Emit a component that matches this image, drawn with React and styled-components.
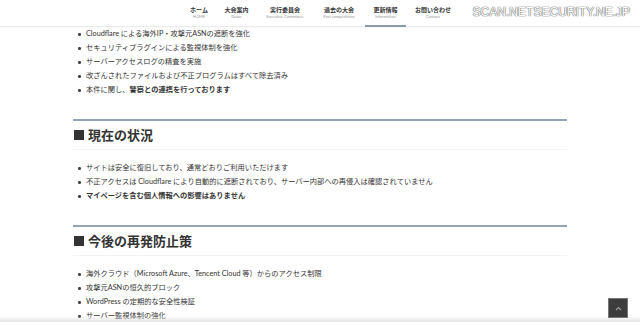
import React from "react";
import styled, { createGlobalStyle } from "styled-components";

const Global = createGlobalStyle`
  html, body { margin: 0; padding: 0; background: #fff; }
  body {
    font-family: Lato, "Noto Sans CJK JP", sans-serif;
    color: #333;
    overflow: hidden;
    height: 322px;
  }
`;

const Page = styled.div`
  width: 640px;
  height: 322px;
  position: relative;
  overflow: hidden;
`;

const Header = styled.header`
  height: 27px;
  border-bottom: 1px solid #ebebeb;
  box-shadow: 0 1px 2px rgba(0,0,0,0.03);
  display: flex;
  justify-content: flex-start;
  padding-left: 182px;
  box-sizing: border-box;
`;

const Nav = styled.nav`
  display: flex;
  height: 100%;
`;

const NavItem = styled.div`
  display: flex;
  flex-direction: column;
  align-items: center;
  justify-content: center;
  padding: 1px 0 0;
  width: ${p => p.$w}px;
  box-sizing: border-box;
  border-bottom: 2px solid ${p => (p.$active ? "#8a9aab" : "transparent")};
  height: 27px;
`;

const NavJp = styled.span`
  font-size: 6px;
  font-weight: 700;
  color: #333;
  line-height: 8px;
`;

const NavEn = styled.span`
  font-size: 4px;
  color: #999;
  line-height: 6px;
  white-space: nowrap;
`;

const Watermark = styled.div`
  position: absolute;
  top: 4px;
  right: 10px;
  font-family: "Liberation Sans", sans-serif;
  font-size: 12.2px;
  letter-spacing: -0.1px;
  color: #fff;
  text-shadow: 0 0 1px #666, 0 0 1px #666, 0 0 1px #888;
  line-height: 16px;
`;

const Main = styled.main`
  width: 494px;
  margin: 0 auto;
`;

const List = styled.ul`
  list-style: none;
  margin: 0;
  padding: ${p => p.$pt || 0}px 0 0 13px;
`;

const Item = styled.li`
  position: relative;
  font-size: 7.25px;
  line-height: 14px;
  height: 14px;
  white-space: nowrap;
  font-weight: ${p => (p.$bold ? 700 : 400)};
  &::before {
    content: "";
    position: absolute;
    left: -8px;
    top: 6px;
    width: 2.5px;
    height: 2.5px;
    border-radius: 50%;
    background: #444;
  }
`;

const Strong = styled.strong`
  font-weight: 700;
`;

const Section = styled.section`
  margin-top: ${p => p.$mt}px;
  border-top: 2px solid #95a4b4;
`;

const Heading = styled.h2`
  margin: 0;
  font-size: 13px;
  font-weight: 700;
  color: #333;
  line-height: 28px;
  height: 28px;
  border-bottom: 1px solid #f3f3f3;
  display: flex;
  align-items: center;
  gap: 4px;
  padding-left: 1px;
`;

const Square = styled.span`
  display: inline-block;
  width: 10px;
  height: 10px;
  background: #333;
`;

const BottomFade = styled.div`
  position: absolute;
  left: 0;
  right: 0;
  bottom: 0;
  height: 6px;
  background: linear-gradient(to bottom, rgba(230,230,230,0), rgba(225,225,225,0.9));
  pointer-events: none;
`;

const TopButton = styled.div`
  position: absolute;
  left: 608px;
  top: 298px;
  width: 20px;
  height: 20px;
  box-sizing: border-box;
  background: #3d3d3d;
  border: 1.5px solid #777;
  display: flex;
  align-items: center;
  justify-content: center;
`;

const navItems = [
  ["ホーム", "HOME", 34],
  ["大会案内", "Guide", 41],
  ["実行委員会", "Executive Committee", 56],
  ["過去の大会", "Past competitions", 52],
  ["更新情報", "Information", 41, true],
  ["お問い合わせ", "Contact", 54],
];

export default function App() {
  return (
    <Page>
      <Global />
      <Header>
        <Nav>
          {navItems.map(([jp, en, w, active]) => (
            <NavItem key={jp} $w={w} $active={active}>
              <NavJp>{jp}</NavJp>
              <NavEn>{en}</NavEn>
            </NavItem>
          ))}
        </Nav>
      </Header>
      <Watermark>SCAN.NETSECURITY.NE.JP</Watermark>
      <Main>
        <List>
          <Item>Cloudflare による海外IP・攻撃元ASNの遮断を強化</Item>
          <Item>セキュリティプラグインによる監視体制を強化</Item>
          <Item>サーバーアクセスログの精査を実施</Item>
          <Item>改ざんされたファイルおよび不正プログラムはすべて除去済み</Item>
          <Item>本件に関し、<Strong>警察との連携を行っております</Strong></Item>
        </List>
        <Section $mt={22}>
          <Heading><Square />現在の状況</Heading>
          <List $pt={11}>
            <Item>サイトは安全に復旧しており、通常どおりご利用いただけます</Item>
            <Item>不正アクセスは Cloudflare により自動的に遮断されており、サーバー内部への再侵入は確認されていません</Item>
            <Item $bold>マイページを含む個人情報への影響はありません</Item>
          </List>
        </Section>
        <Section $mt={22}>
          <Heading><Square />今後の再発防止策</Heading>
          <List $pt={11}>
            <Item>海外クラウド（Microsoft Azure、Tencent Cloud 等）からのアクセス制限</Item>
            <Item>攻撃元ASNの恒久的ブロック</Item>
            <Item>WordPress の定期的な安全性検証</Item>
            <Item>サーバー監視体制の強化</Item>
          </List>
        </Section>
      </Main>
      <BottomFade />
      <TopButton>
        <svg width="7" height="5" viewBox="0 0 7 5">
          <path d="M1 4 L3.5 1.5 L6 4" fill="none" stroke="#999" strokeWidth="1.2" />
        </svg>
      </TopButton>
    </Page>
  );
}
